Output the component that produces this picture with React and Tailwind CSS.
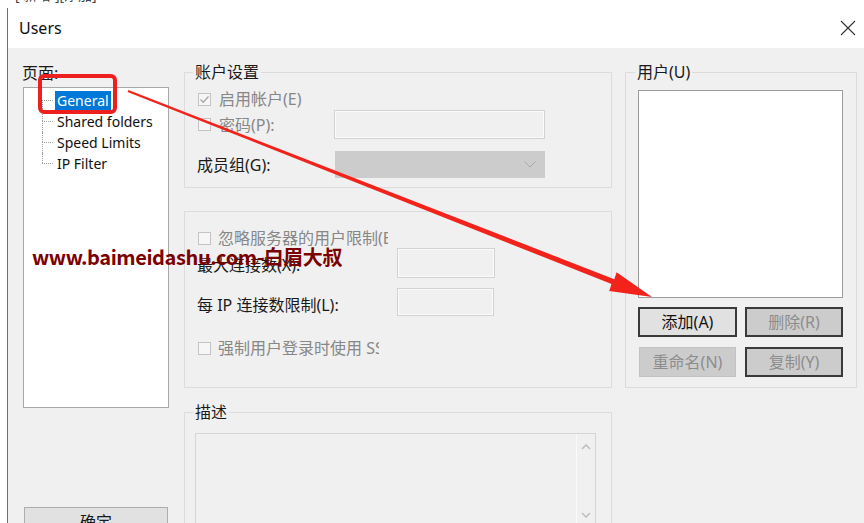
function Checkbox({ checked }) {
  return (
    <div className="w-[13px] h-[13px] shrink-0 border border-[#c4c4c4] bg-[#f6f6f6] flex items-center justify-center">
      {checked && (
        <svg width="11" height="11" viewBox="0 0 11 11">
          <path d="M1.5 5.5 L4.2 8.2 L9.5 2.5" fill="none" stroke="#a6a6a6" strokeWidth="1.3" />
        </svg>
      )}
    </div>
  );
}

function TextBox({ w, h }) {
  return (
    <div
      className="shrink-0 border border-[#d2d2d2] bg-[#f0f0f0] shadow-[inset_0_0_0_1px_#fbfbfb]"
      style={{ width: w, height: h }}
    />
  );
}

function TreeItem({ label, first, last, selected }) {
  return (
    <div className="flex h-[21px]">
      <div className="w-[18px] shrink-0" />
      <div className="w-[13px] shrink-0 flex flex-col">
        <div className={"h-[10px] " + (first ? "" : "border-l border-dotted border-[#a0a0a0]")} />
        <div className={"h-[11px] w-[11px] border-t border-dotted border-[#a0a0a0] " + (last ? "" : "border-l")} />
      </div>
      <span
        className={
          "self-center h-[19px] leading-[19px] px-[2px] text-[14px] whitespace-nowrap " +
          (selected ? "bg-[#0078d7] text-white" : "text-[#111]")
        }
      >
        {label}
      </span>
    </div>
  );
}

export default function App() {
  const gray = "text-[#878787]";
  return (
    <div className="relative w-[864px] h-[523px] overflow-hidden bg-white font-['Noto_Sans','Noto_Sans_CJK_SC',sans-serif] text-[#1a1a1a] text-[16px]">
      <div className="h-[8px] overflow-hidden pl-[15px]">
        <div className="-mt-[13px] text-[14px] leading-[16px] text-[#444] whitespace-nowrap">[ 新增 ][添加]</div>
      </div>
      <div className="ml-[7px] border-l border-[#6e6e78] h-[515px] flex flex-col">
        <div className="h-[40px] shrink-0 flex items-center justify-between pl-[11px] pr-[8px] bg-white">
          <span className="text-[16px] text-[#111]">Users</span>
          <svg width="16" height="16" viewBox="0 0 16 16">
            <path d="M1 1 L15 15 M15 1 L1 15" stroke="#333" strokeWidth="1.1" fill="none" />
          </svg>
        </div>
        <div className="flex-1 bg-[#f0f0f0] flex items-start">
          {/* left column */}
          <div className="ml-[15px] w-[146px] shrink-0 pt-[15px] flex flex-col">
            <div className="-ml-[1px] leading-[20px]">页面:</div>
            <div className="mt-[4px] h-[321px] border border-[#a8a8a8] bg-white pt-[2px]">
              <TreeItem label="General" first selected />
              <TreeItem label="Shared folders" />
              <TreeItem label="Speed Limits" />
              <TreeItem label="IP Filter" last />
            </div>
            <div className="mt-[99px] ml-[1px] w-[144px] h-[30px] border border-[#adadad] bg-[#e1e1e1] flex items-center justify-center">
              确定
            </div>
          </div>

          {/* middle column */}
          <div className="ml-[15px] w-[428px] shrink-0 pt-[15px] flex flex-col">
            <fieldset className="border border-[#dcdcdc] pb-[9px]">
              <legend className="ml-[8px] px-[2px] leading-[18px]">账户设置</legend>
              <div className="mt-[8px] h-[20px] flex items-center pl-[13px]">
                <Checkbox checked />
                <span className={"ml-[8px] " + gray}>启用帐户(E)</span>
              </div>
              <div className="mt-[1px] h-[29px] flex items-center pl-[13px]">
                <Checkbox />
                <span className={"ml-[8px] w-[115px] " + gray}>密码(P):</span>
                <TextBox w={211} h={29} />
              </div>
              <div className="mt-[12px] h-[27px] flex items-center pl-[12px]">
                <span className="w-[138px]">成员组(G):</span>
                <div className="w-[210px] h-[27px] bg-[#cccccc] border border-[#cccccc] flex items-center justify-end pr-[8px]">
                  <svg width="12" height="7" viewBox="0 0 12 7">
                    <path d="M0.5 0.5 L6 6 L11.5 0.5" fill="none" stroke="#a9a9a9" strokeWidth="1" />
                  </svg>
                </div>
              </div>
            </fieldset>

            <div className="mt-[23px] border border-[#dcdcdc] pb-[29px]">
              <div className="mt-[16px] h-[20px] flex items-center pl-[13px]">
                <Checkbox />
                <span className={"ml-[7px] w-[170px] overflow-hidden whitespace-nowrap " + gray}>忽略服务器的用户限制(E)</span>
              </div>
              <div className="h-[30px] flex items-center pl-[12px]">
                <span className="w-[200px] pt-[3px]">最大连接数(X):</span>
                <TextBox w={98} h={30} />
              </div>
              <div className="mt-[10px] h-[28px] flex items-center pl-[12px]">
                <span className="w-[200px] pt-[6px]">每 IP 连接数限制(L):</span>
                <TextBox w={97} h={28} />
              </div>
              <div className="mt-[22px] h-[20px] flex items-center pl-[13px]">
                <Checkbox />
                <span className={"ml-[7px] w-[161px] overflow-hidden whitespace-nowrap " + gray}>强制用户登录时使用 SSL</span>
              </div>
            </div>

            <fieldset className="mt-[15px] border border-[#dcdcdc] h-[140px]">
              <legend className="ml-[8px] px-[2px] leading-[18px]">描述</legend>
              <div className="mt-[12px] ml-[10px] w-[401px] h-[110px] border border-[#d5d5d5] bg-[#f0f0f0] flex">
                <div className="flex-1" />
                <div className="w-[19px] border-l border-[#fafafa] flex flex-col items-center">
                  <svg className="mt-[10px]" width="10" height="6" viewBox="0 0 10 6">
                    <path d="M1 5 L5 1 L9 5" fill="none" stroke="#bdbdbd" strokeWidth="1.5" />
                  </svg>
                  <svg className="mt-[62px]" width="10" height="6" viewBox="0 0 10 6">
                    <path d="M1 1 L5 5 L9 1" fill="none" stroke="#bdbdbd" strokeWidth="1.5" />
                  </svg>
                </div>
              </div>
            </fieldset>
          </div>

          {/* right column */}
          <div className="ml-[13px] w-[232px] shrink-0 pt-[15px]">
            <fieldset className="border border-[#dcdcdc] pb-[10px]">
              <legend className="ml-[9px] px-[2px] leading-[18px]">用户(U)</legend>
              <div className="mt-[9px] ml-[12px] w-[205px] h-[208px] border border-[#9c9c9c] bg-white" />
              <div className="mt-[9px] pl-[12px] flex gap-[8px]">
                <div className="w-[99px] h-[30px] border-2 border-[#3a3a3a] bg-[#e1e1e1] flex items-center justify-center text-[#111]">添加(A)</div>
                <div className="w-[98px] h-[30px] border-2 border-[#3a3a3a] bg-[#cccccc] flex items-center justify-center text-[#8c8c8c]">删除(R)</div>
              </div>
              <div className="mt-[10px] pl-[13px] flex gap-[9px]">
                <div className="w-[97px] h-[30px] border border-[#c2c2c2] bg-[#cccccc] flex items-center justify-center text-[#8c8c8c]">重命名(N)</div>
                <div className="w-[98px] h-[30px] border-2 border-[#3a3a3a] bg-[#cccccc] flex items-center justify-center text-[#8c8c8c]">复制(Y)</div>
              </div>
            </fieldset>
          </div>
        </div>
      </div>

      {/* annotations */}
      <div className="absolute left-[32px] top-[245px] text-[20px] leading-[24px] font-bold tracking-[-0.4px] text-[#7b0000] whitespace-nowrap font-['Noto_Sans_CJK_SC',sans-serif]">
        www.baimeidashu.com-白眉大叔
      </div>
      <svg className="absolute left-0 top-0 pointer-events-none" width="864" height="523" viewBox="0 0 864 523">
        <rect x="40" y="76" width="75" height="36" rx="4" fill="none" stroke="#ee1f1f" strokeWidth="4" />
        <polygon points="128.4,90.1 614.3,279.2 616.6,272.3 652,297 609.2,290.9 611.5,284.0 127.6,91.9" fill="#f2231b" />
      </svg>
    </div>
  );
}
